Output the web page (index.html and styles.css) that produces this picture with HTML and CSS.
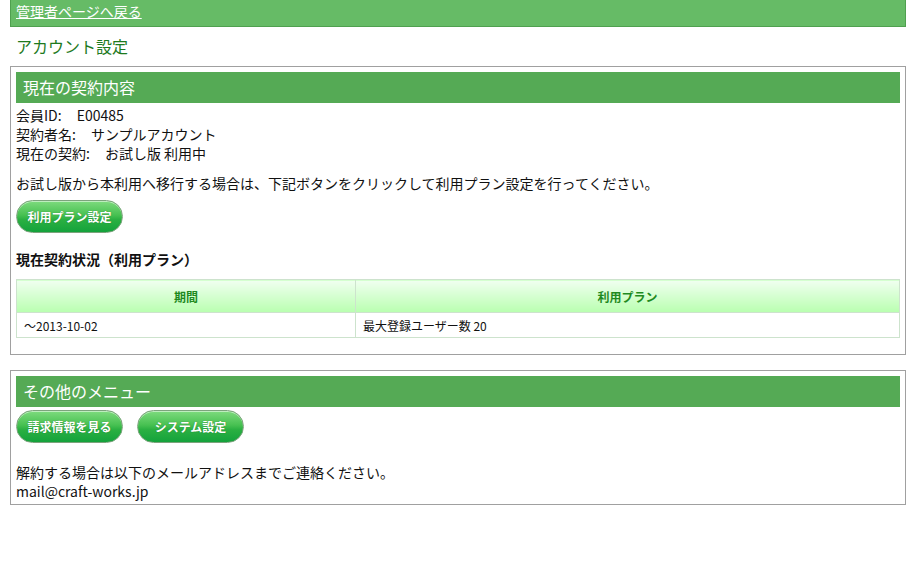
FILE: index.html
```html
<!DOCTYPE html>
<html lang="ja">
<head>
<meta charset="utf-8">
<title>アカウント設定</title>
<link rel="stylesheet" href="styles.css">
</head>
<body>
<div class="topbar"><a href="#" class="back">管理者ページへ戻る</a></div>
<h1 class="title">アカウント設定</h1>

<section class="box">
  <h2 class="box-head">現在の契約内容</h2>
  <div class="info">
    <div>会員ID:<span class="val">E00485</span></div>
    <div>契約者名:<span class="val">サンプルアカウント</span></div>
    <div>現在の契約:<span class="val">お試し版 利用中</span></div>
  </div>
  <p class="note">お試し版から本利用へ移行する場合は、下記ボタンをクリックして利用プラン設定を行ってください。</p>
  <div class="btns"><a href="#" class="btn">利用プラン設定</a></div>
  <h3 class="sub">現在契約状況（利用プラン）</h3>
  <table class="plan">
    <thead>
      <tr><th class="c1">期間</th><th>利用プラン</th></tr>
    </thead>
    <tbody>
      <tr><td>～2013-10-02</td><td>最大登録ユーザー数 20</td></tr>
    </tbody>
  </table>
</section>

<section class="box box2">
  <h2 class="box-head">その他のメニュー</h2>
  <div class="btns"><a href="#" class="btn">請求情報を見る</a><a href="#" class="btn">システム設定</a></div>
  <div class="contact">
    <div>解約する場合は以下のメールアドレスまでご連絡ください。</div>
    <div>mail@craft-works.jp</div>
  </div>
</section>
</body>
</html>
```

FILE: styles.css
```css
* { box-sizing: border-box; }
html, body { margin: 0; padding: 0; background: #fff; }
body {
  padding: 0 10px;
  font-family: "Noto Sans CJK JP", "Noto Sans", sans-serif;
  font-size: 14px;
  line-height: 19px;
  color: #111;
}
.topbar {
  height: 27px;
  background: #66bb66;
  border: 1px solid #4fa04f;
  border-top: 0;
  padding: 1px 5px 0;
}
.back {
  color: #fff;
  font-size: 14px;
  line-height: 20px;
  text-decoration: underline;
}
.title {
  margin: 9px 0 0 6px;
  font-size: 16px;
  font-weight: normal;
  line-height: 20px;
  color: #1e7a1e;
}
.box {
  margin-top: 10px;
  border: 1px solid #a0a0a0;
  padding: 5px 5px 16px;
}
.box2 { margin-top: 15px; padding-bottom: 3px; }
.box-head {
  margin: 0 0 3px;
  height: 31px;
  background: #55aa55;
  color: #fff;
  font-size: 16px;
  font-weight: normal;
  line-height: 31px;
  padding-left: 7px;
}
.info div { height: 19px; }
.val { margin-left: 15px; }
.note { margin: 11px 0 7px; }
.btns { display: flex; gap: 14px; }
.btn {
  display: flex;
  align-items: center;
  justify-content: center;
  width: 107px;
  height: 33px;
  border-radius: 17px;
  border: 1px solid #7da37d;
  background: linear-gradient(#7edb7e 0%, #48c152 45%, #2bb042 60%, #14a23c 100%);
  box-shadow: inset 0 1px 0 rgba(255,255,255,0.5);
  color: #fff;
  font-size: 12px;
  font-weight: bold;
  text-decoration: none;
  text-shadow: 0 0 1px rgba(0,60,0,0.5);
}
.sub {
  margin: 17px 0 10px;
  font-size: 14px;
  font-weight: bold;
  line-height: 19px;
}
.plan {
  width: 100%;
  border-collapse: collapse;
  font-size: 12px;
}
.plan th, .plan td { border: 1px solid #cde3cd; }
.plan th {
  height: 33px;
  background: linear-gradient(#f0fff0 0%, #b9ffb0 100%);
  color: #1f8a1f;
  font-weight: bold;
  text-align: center;
}
.plan th.c1 { width: 339px; }
.plan td {
  height: 25px;
  padding: 0 7px;
  color: #111;
}
.contact { margin-top: 20px; }
.contact div { height: 19px; }
```
